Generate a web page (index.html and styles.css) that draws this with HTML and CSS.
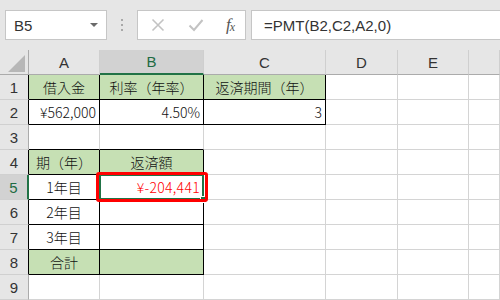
FILE: index.html
```html
<!DOCTYPE html>
<html lang="ja">
<head>
    <meta charset="UTF-8">
    <title>PMT</title>
    <link rel="stylesheet" href="styles.css">
</head>
<body>
    <div class="toolbar">
        <div class="name-box">
            <span>B5</span>
            <span class="arrow"></span>
        </div>
        <div class="grip"><i></i><i></i><i></i></div>
        <div class="fx-box">
            <svg class="ico" width="14" height="14" viewBox="0 0 14 14">
                <path d="M1.5 1.5 L12.5 12.5 M12.5 1.5 L1.5 12.5" stroke="#c3c3c3" stroke-width="1.6" fill="none"/>
            </svg>
            <svg class="ico" width="16" height="14" viewBox="0 0 16 14">
                <path d="M1.5 7.5 L6 12 L14.5 2" stroke="#c3c3c3" stroke-width="2" fill="none"/>
            </svg>
            <span class="fx">f<sub>x</sub></span>
        </div>
        <div class="formula">=PMT(B2,C2,A2,0)</div>
    </div>

    <div class="sheet">
        <!-- header row -->
        <div class="c corner">
            <svg width="28" height="24" viewBox="0 0 28 24"><polygon points="8,22 25,22 25,5" fill="#b7b7b7"/></svg>
        </div>
        <div class="c ch">A</div>
        <div class="c ch sel">B</div>
        <div class="c ch">C</div>
        <div class="c ch">D</div>
        <div class="c ch">E</div>
        <div class="c ch"></div>

        <!-- 1 -->
        <div class="c rh edge">1</div>
        <div class="c box fill">借入金</div>
        <div class="c box fill">利率（年率）</div>
        <div class="c box fill">返済期間（年）</div>
        <div class="c"></div>
        <div class="c"></div>
        <div class="c"></div>

        <!-- 2 -->
        <div class="c rh edge">2</div>
        <div class="c box num">¥562,000</div>
        <div class="c box num">4.50%</div>
        <div class="c box num">3</div>
        <div class="c"></div>
        <div class="c"></div>
        <div class="c"></div>

        <!-- 3 -->
        <div class="c rh">3</div>
        <div class="c top"></div>
        <div class="c top"></div>
        <div class="c"></div>
        <div class="c"></div>
        <div class="c"></div>
        <div class="c"></div>

        <!-- 4 -->
        <div class="c rh edge">4</div>
        <div class="c box fill">期（年）</div>
        <div class="c box fill">返済額</div>
        <div class="c"></div>
        <div class="c"></div>
        <div class="c"></div>
        <div class="c"></div>

        <!-- 5 -->
        <div class="c rh edge sel-row">5</div>
        <div class="c box">1年目</div>
        <div class="c box num active">
            <span class="minus">¥-204,441</span>
            <span class="selection"></span>
            <span class="handle"></span>
            <span class="mark"></span>
        </div>
        <div class="c"></div>
        <div class="c"></div>
        <div class="c"></div>
        <div class="c"></div>

        <!-- 6 -->
        <div class="c rh edge">6</div>
        <div class="c box">2年目</div>
        <div class="c box"></div>
        <div class="c"></div>
        <div class="c"></div>
        <div class="c"></div>
        <div class="c"></div>

        <!-- 7 -->
        <div class="c rh edge">7</div>
        <div class="c box">3年目</div>
        <div class="c box"></div>
        <div class="c"></div>
        <div class="c"></div>
        <div class="c"></div>
        <div class="c"></div>

        <!-- 8 -->
        <div class="c rh edge">8</div>
        <div class="c box fill">合計</div>
        <div class="c box fill"></div>
        <div class="c"></div>
        <div class="c"></div>
        <div class="c"></div>
        <div class="c"></div>

        <!-- 9 -->
        <div class="c rh">9</div>
        <div class="c"></div>
        <div class="c"></div>
        <div class="c"></div>
        <div class="c"></div>
        <div class="c"></div>
        <div class="c"></div>
    </div>
</body>
</html>
```

FILE: styles.css
```css
body {
    margin: 0;
    width: 500px;
    height: 300px;
    overflow: hidden;
    background: #e6e6e6;
    font-family: "Liberation Sans", Arial, sans-serif;
}

.toolbar {
    display: flex;
    height: 50px;
    padding: 10px 0 0 5px;
    box-sizing: border-box;
}

.name-box {
    width: 102px;
    height: 30px;
    box-sizing: border-box;
    background: #fff;
    border: 1px solid #c6c6c6;
    display: flex;
    align-items: center;
    justify-content: space-between;
    padding: 0 8px 0 8px;
    font-size: 15px;
    color: #333;
}

.name-box .arrow {
    width: 0;
    height: 0;
    border-left: 4px solid transparent;
    border-right: 4px solid transparent;
    border-top: 4px solid #6a6a6a;
}

.grip {
    width: 30px;
    display: flex;
    flex-direction: column;
    align-items: center;
    justify-content: center;
    gap: 3px;
    height: 30px;
}

.grip i {
    width: 2px;
    height: 2px;
    background: #a8a8a8;
}

.fx-box {
    width: 109px;
    height: 30px;
    box-sizing: border-box;
    background: #fff;
    border: 1px solid #c6c6c6;
    display: flex;
    align-items: center;
    padding-left: 13px;
}

.fx-box .ico:nth-child(2) {
    margin-left: 23px;
}

.fx {
    margin-left: 22px;
    font-family: "Liberation Serif", serif;
    font-style: italic;
    font-size: 17px;
    color: #555;
}

.fx sub {
    font-size: 12px;
    vertical-align: -1px;
    margin-left: -1px;
}

.formula {
    flex: 1;
    height: 30px;
    margin-left: 5px;
    box-sizing: border-box;
    background: #fff;
    border: 1px solid #c6c6c6;
    border-right: none;
    padding-left: 12px;
    display: flex;
    align-items: center;
    font-size: 15px;
    color: #333;
}

.sheet {
    display: grid;
    grid-template-columns: 29px 71px 104px 122px 72px 71px 31px;
    grid-auto-rows: 25px;
    background: #fff;
}

.c {
    box-sizing: border-box;
    border-right: 1px solid #d4d4d4;
    border-bottom: 1px solid #d4d4d4;
    display: flex;
    align-items: center;
    justify-content: center;
    padding: 0 3px;
    font-family: "Noto Sans CJK JP", sans-serif;
    font-size: 14px;
    font-weight: 300;
    color: #111;
    white-space: nowrap;
}

.corner {
    background: #e6e6e6;
    border-right: 1px solid #ababab;
    border-bottom: 1px solid #ababab;
    padding: 0;
}

.ch {
    background: #e6e6e6;
    border-right: 1px solid #cfcfcf;
    border-bottom: 1px solid #ababab;
    font-family: "Liberation Sans", Arial, sans-serif;
    font-size: 15px;
    font-weight: 400;
    color: #333;
}

.ch.sel {
    background: #d2d2d2;
    color: #1e6b43;
    border-bottom: 2px solid #217346;
}

.rh {
    background: #e6e6e6;
    border-right: 1px solid #ababab;
    border-bottom: 1px solid #d0d0d0;
    font-family: "Liberation Sans", Arial, sans-serif;
    font-size: 15px;
    font-weight: 400;
    color: #333;
}

.rh.edge {
    border-right-color: #000;
}

.rh.sel-row {
    background: #d2d2d2;
    color: #1e6b43;
    border-right: 2px solid #217346;
}

.box {
    border-right-color: #000;
    border-bottom-color: #000;
}

.top {
    border-bottom-color: #000;
}

.fill {
    background: #c6e0b4;
}

.num {
    justify-content: flex-end;
}

.active {
    position: relative;
}

.minus {
    color: #ff0000;
    letter-spacing: 0.3px;
}

.selection {
    position: absolute;
    left: -1px;
    top: -1px;
    right: -1px;
    bottom: -1px;
    border: 2px solid #217346;
}

.handle {
    position: absolute;
    right: -4px;
    bottom: -4px;
    width: 5px;
    height: 5px;
    background: #217346;
    border: 1px solid #fff;
}

.mark {
    position: absolute;
    left: -4px;
    top: -3px;
    right: -5px;
    bottom: -3px;
    border: 3px solid #ff0000;
    border-radius: 3px;
}
```
